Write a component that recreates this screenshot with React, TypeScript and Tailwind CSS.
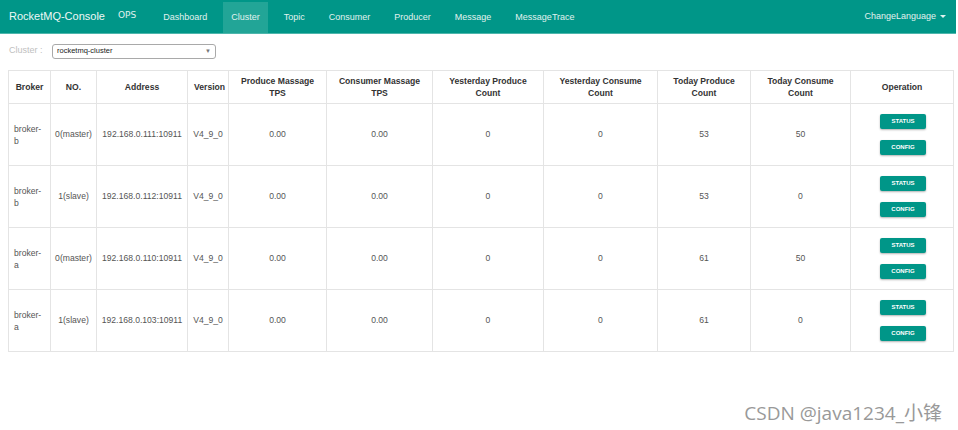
const navItems = ['Dashboard', 'Cluster', 'Topic', 'Consumer', 'Producer', 'Message', 'MessageTrace'];

const headers = [
    'Broker',
    'NO.',
    'Address',
    'Version',
    'Produce Massage TPS',
    'Consumer Massage TPS',
    'Yesterday Produce Count',
    'Yesterday Consume Count',
    'Today Produce Count',
    'Today Consume Count',
    'Operation',
];

const widths = [42, 46, 91, 41, 98, 106, 111, 114, 93, 100, 103];

const rows = [
    { broker: 'broker-b', no: '0(master)', addr: '192.168.0.111:10911', today: '53', todayC: '50' },
    { broker: 'broker-b', no: '1(slave)', addr: '192.168.0.112:10911', today: '53', todayC: '0' },
    { broker: 'broker-a', no: '0(master)', addr: '192.168.0.110:10911', today: '61', todayC: '50' },
    { broker: 'broker-a', no: '1(slave)', addr: '192.168.0.103:10911', today: '61', todayC: '0' },
];

const Btn = ({ label }: { label: string }) => (
    <button className="w-[46px] h-[15px] bg-[#009688] text-white text-[6px] font-semibold rounded-[2px] shadow-[0_1px_2px_rgba(0,0,0,0.3)] flex items-center justify-center">
        {label}
    </button>
);

export default function App() {
    return (
        <div className="relative w-[958px] h-[430px] bg-white overflow-hidden" style={{ fontFamily: '"Liberation Sans", Arial, sans-serif' }}>
            <nav className="h-[34px] bg-[#009688] border-b border-[#4db6ac] flex items-stretch text-[#e0f2ef] w-[956px]">
                <div className="pl-[9px] pr-[13px] flex items-center text-[11px] text-[#eef8f6]">RocketMQ-Console</div>
                <div className="flex items-center text-[9px] pb-[2px] mr-[27px]" style={{ fontFamily: '"DejaVu Sans", sans-serif' }}>OPS</div>
                <ul className="flex items-stretch gap-[8px] ml-[-8px] text-[9px]">
                    {navItems.map((n) => (
                        <li
                            key={n}
                            className={`px-2 mt-[2px] flex items-center ${n === 'Cluster' ? 'bg-[#22a597]' : ''}`}
                        >
                            {n}
                        </li>
                    ))}
                </ul>
                <div className="ml-auto pr-[10px] flex items-center text-[9px] gap-[4px]">
                    ChangeLanguage
                    <span className="w-0 h-0 border-l-[3px] border-r-[3px] border-t-[3px] border-l-transparent border-r-transparent border-t-[#e0f2ef]" />
                </div>
            </nav>

            <div className="flex items-center h-[16px] mt-[9px] ml-[9px]">
                <span className="text-[9px] text-[#c0c0c0] w-[43px]">Cluster :</span>
                <div className="w-[164px] h-[15px] border border-[#a9a9a9] rounded-[3px] flex items-center justify-between px-[4px] text-[7.5px] text-[#222]">
                    rocketmq-cluster
                    <span className="text-[6px] text-[#777]">▼</span>
                </div>
            </div>

            <table className="ml-[8px] mt-[11px] border-collapse table-fixed w-[945px] text-[8.6px] text-[#555]">
                <colgroup>
                    {widths.map((w, i) => (
                        <col key={i} style={{ width: w }} />
                    ))}
                </colgroup>
                <thead>
                    <tr className="h-[33px]">
                        {headers.map((h) => (
                            <th key={h} className="border border-[#e4e4e4] font-bold text-[#333] px-[6px] leading-[12px] text-center align-middle">
                                {h}
                            </th>
                        ))}
                    </tr>
                </thead>
                <tbody>
                    {rows.map((r, i) => (
                        <tr key={i} className="h-[62px]">
                            <td className="border border-[#e4e4e4] px-[5px] leading-[12px] text-left align-middle break-words">{r.broker}</td>
                            <td className="border border-[#e4e4e4] text-center">{r.no}</td>
                            <td className="border border-[#e4e4e4] text-center">{r.addr}</td>
                            <td className="border border-[#e4e4e4] text-center">V4_9_0</td>
                            <td className="border border-[#e4e4e4] text-center">0.00</td>
                            <td className="border border-[#e4e4e4] text-center">0.00</td>
                            <td className="border border-[#e4e4e4] text-center">0</td>
                            <td className="border border-[#e4e4e4] text-center">0</td>
                            <td className="border border-[#e4e4e4] text-center">{r.today}</td>
                            <td className="border border-[#e4e4e4] text-center">{r.todayC}</td>
                            <td className="border border-[#e4e4e4]">
                                <div className="flex flex-col items-center gap-[11px] pl-[2px]">
                                    <Btn label="STATUS" />
                                    <Btn label="CONFIG" />
                                </div>
                            </td>
                        </tr>
                    ))}
                </tbody>
            </table>

            <div
                className="absolute right-[16px] bottom-[7px] text-[19px] leading-none text-[#999]"
                style={{ fontFamily: '"Open Sans", "Noto Sans CJK SC", sans-serif' }}
            >
                CSDN @java1234_小锋
            </div>
        </div>
    );
}
